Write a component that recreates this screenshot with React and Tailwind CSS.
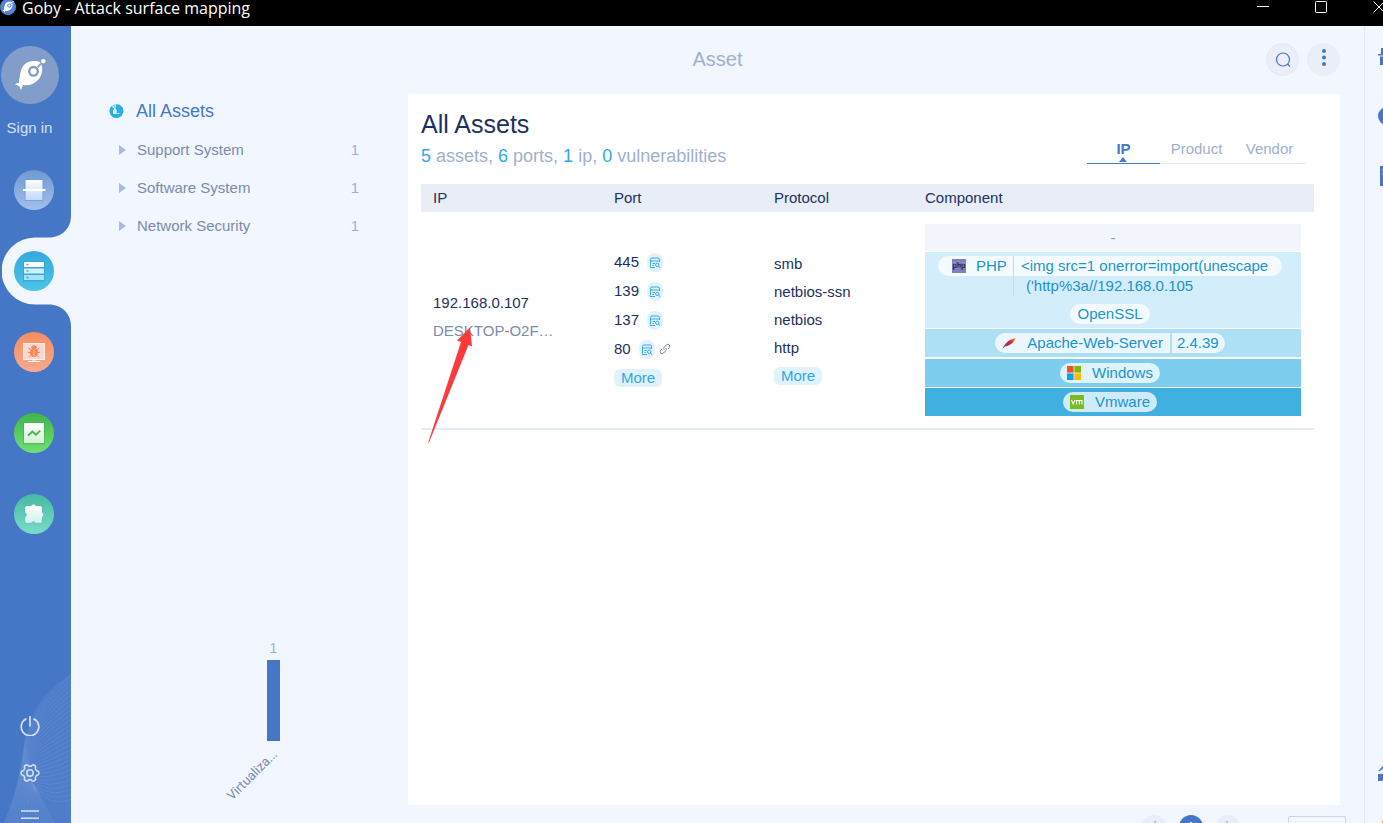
import { useState } from "react";

const assetTypes = [
    { name: "Support System", count: 1 },
    { name: "Software System", count: 1 },
    { name: "Network Security", count: 1 },
];

const ports = [
    { port: 445, link: false },
    { port: 139, link: false },
    { port: 137, link: false },
    { port: 80, link: true },
];

const protocols = ["smb", "netbios-ssn", "netbios", "http"];

const waveLines = Array.from({ length: 26 }, (_, i) => i);

// six-lobed outline of the settings gear
const gearPath =
    "M" +
    Array.from({ length: 72 }, (_, i) => {
        const angle = (i * Math.PI) / 36;
        const radius = 8.6 + 1.2 * Math.tanh(2 * Math.cos(6 * angle));
        return `${(11 + radius * Math.cos(angle)).toFixed(2)} ${(11 + radius * Math.sin(angle)).toFixed(2)}`;
    }).join("L") +
    "z";

const GobyShape = ({ className, hole }) => (
    <svg viewBox="0 0 32 32" className={className} aria-hidden="true">
        <path
            d="M.8 25.300 5 23.500C6 12 8 5 15 2.800c4-1.200 8-1 11 .2C29.500 8 29 16 24 21c-5 5-11 6-15 5l-2 5-1.800-3.700z"
            fill="#fff"
        />
        <circle cx="19.500" cy="12.300" r="5.500" fill={hole} />
        <circle cx="19.500" cy="12.300" r="3.100" fill="#fff" />
        <path d="m23.500 8.300 3.500-3.800" stroke={hole} strokeWidth="1.800" />
        <circle cx="29.300" cy="2.300" r="2.200" fill="#fff" />
    </svg>
);

const ScanIcon = () => (
    <svg viewBox="0 0 40 40" className="size-10" aria-hidden="true">
        <defs>
            <linearGradient id="scanBg" x2="0" y2="1">
                <stop stopColor="#6f98d3" />
                <stop offset="1" stopColor="#a3bfec" />
            </linearGradient>
            <linearGradient id="scanFg" x2="0" y2="1">
                <stop stopColor="#fbfdff" />
                <stop offset="1" stopColor="#c2d8ff" />
            </linearGradient>
        </defs>
        <circle cx="20" cy="20" r="20" fill="url(#scanBg)" />
        <rect x="10.500" y="9.500" width="19" height="21.500" fill="#5c88cf" opacity=".45" />
        <rect x="11.500" y="10" width="17" height="20" fill="url(#scanFg)" />
        <rect x="9" y="19" width="22.500" height="2" fill="#fff" />
    </svg>
);

const AssetIcon = () => (
    <svg viewBox="0 0 40 40" className="size-10" aria-hidden="true">
        <defs>
            <linearGradient id="assetBg" x2="0" y2="1">
                <stop stopColor="#36a9df" />
                <stop offset="1" stopColor="#4cc4ea" />
            </linearGradient>
        </defs>
        <circle cx="20" cy="20" r="20" fill="url(#assetBg)" />
        <rect x="9" y="10.500" width="22" height="20" fill="#2490c4" opacity=".4" />
        <rect x="10" y="11" width="20" height="5" fill="#fff" />
        <rect x="10" y="17.500" width="20" height="5" fill="#d3f1fb" />
        <rect x="10" y="24" width="20" height="5" fill="#a6e3f6" />
        <path d="M12.500 13.500h2M12.500 20h2M12.500 26.500h2" stroke="#3aaede" strokeWidth="1.500" />
    </svg>
);

const VulnIcon = () => (
    <svg viewBox="0 0 40 40" className="size-10" aria-hidden="true">
        <defs>
            <linearGradient id="vulnBg" x2="0" y2="1">
                <stop stopColor="#f78d5e" />
                <stop offset="1" stopColor="#f9a990" />
            </linearGradient>
        </defs>
        <circle cx="20" cy="20" r="20" fill="url(#vulnBg)" />
        <rect x="9.500" y="11.500" width="21" height="16" fill="#ffd9cf" stroke="#fff0eb" />
        <path d="M14 29.500h12M18 28h4" stroke="#fff" strokeWidth="1.200" />
        <g stroke="#f5885a" fill="#f5885a">
            <ellipse cx="20" cy="20.500" rx="3.500" ry="4.200" />
            <path d="M17.500 16c0-3 5-3 5 0zM14 20.500h12M14.500 16l3 2M25.500 16l-3 2M14.500 25.500l3-2.500M25.500 25.500l-3-2.500" />
        </g>
        <path d="M20 17.500v7" stroke="#ffd9cf" strokeWidth=".7" />
    </svg>
);

const ReportIcon = () => (
    <svg viewBox="0 0 40 40" className="size-10" aria-hidden="true">
        <defs>
            <linearGradient id="reportBg" x2="0" y2="1">
                <stop stopColor="#3fb54a" />
                <stop offset="1" stopColor="#6fe075" />
            </linearGradient>
            <linearGradient id="reportFg" x2="0" y2="1">
                <stop stopColor="#fff" />
                <stop offset="1" stopColor="#d2f2d2" />
            </linearGradient>
        </defs>
        <circle cx="20" cy="20" r="20" fill="url(#reportBg)" />
        <rect x="9" y="9.500" width="22" height="22" fill="#2e9a3b" opacity=".35" />
        <rect x="10" y="10" width="20" height="20" fill="url(#reportFg)" />
        <path d="m14 22.500 4.500-4 3.500 3.200 4.200-4" fill="none" stroke="#44b54e" strokeWidth="1.800" />
    </svg>
);

const PluginIcon = () => (
    <svg viewBox="0 0 40 40" className="size-10" aria-hidden="true">
        <defs>
            <linearGradient id="pluginBg" x2="0" y2="1">
                <stop stopColor="#46b9a2" />
                <stop offset="1" stopColor="#79dccb" />
            </linearGradient>
            <linearGradient id="pluginFg" x2="0" y2="1">
                <stop stopColor="#fff" />
                <stop offset="1" stopColor="#cff3ea" />
            </linearGradient>
        </defs>
        <circle cx="20" cy="20" r="20" fill="url(#pluginBg)" />
        <path
            d="M12.500 12h4.700a2.400 2.400 0 0 1 4.600 0h4.700q1.500 0 1.500 1.500v5a2.400 2.400 0 0 1 0 4.500v4.500q0 1.500-1.500 1.500h-5a2.200 2.200 0 0 0-4.200 0h-4.800q-1.500 0-1.500-1.500V23a2.200 2.200 0 0 0 0-4.300v-5.200q0-1.500 1.500-1.500z"
            fill="url(#pluginFg)"
            stroke="#3ea591"
            strokeOpacity=".3"
            strokeWidth=".6"
        />
    </svg>
);

const navItems = [
    { label: "Scan", Icon: ScanIcon },
    { label: "Asset", Icon: AssetIcon },
    { label: "Vulnerability", Icon: VulnIcon },
    { label: "Report", Icon: ReportIcon },
    { label: "Extensions", Icon: PluginIcon },
];

const BannerIcon = () => (
    <svg viewBox="0 0 16 19" className="h-[19px] w-4" aria-hidden="true">
        <rect width="16" height="19" rx="8" fill="#e0f3fc" />
        <g fill="none" stroke="#3aa9e6">
            <path d="M12.500 9V6.500q0-1.500-1.500-1.500H5Q3.500 5 3.500 6.500v7M3 14.500h5M3.500 8h9M5.500 10.500H8M5.500 12.500H7" />
            <circle cx="10.300" cy="11.800" r="1.700" />
            <path d="m11.500 13 1.500 1.800" />
        </g>
    </svg>
);

const LinkIcon = () => (
    <svg viewBox="0 0 12 12" className="size-3" fill="none" stroke="#6f86bd" aria-hidden="true">
        <path d="M5.300 6.900a2 2 0 0 1 0-2.800L7.600 1.700a2 2 0 0 1 2.800 2.800L9 6M6.600 5.100a2 2 0 0 1 0 2.800L4.300 10.300a2 2 0 0 1-2.800-2.800L3 6" />
    </svg>
);

const ApacheIcon = () => (
    <svg viewBox="0 0 14 14" className="size-3.5" aria-hidden="true">
        <defs>
            <linearGradient id="feather" x1="1" y1="0" x2="0" y2="1">
                <stop stopColor="#f69923" />
                <stop offset=".4" stopColor="#d0223a" />
                <stop offset="1" stopColor="#7a3a8e" />
            </linearGradient>
        </defs>
        <path d="M.5 13C2 9 6 3.500 13.500 2 12.500 5.500 9 9.500 3 10.500z" fill="url(#feather)" />
    </svg>
);

const WindowsIcon = () => (
    <svg viewBox="0 0 14 14" className="size-3.5" aria-hidden="true">
        <path d="M0 0h6.600v6.600H0z" fill="#f25022" />
        <path d="M7.400 0H14v6.600H7.400z" fill="#7fba00" />
        <path d="M0 7.400h6.600V14H0z" fill="#00a4ef" />
        <path d="M7.400 7.400H14V14H7.400z" fill="#ffb900" />
    </svg>
);

const Sidebar = () => (
    <nav className="relative flex w-[71px] shrink-0 flex-col overflow-hidden bg-[#4677c7] pt-5">
        <svg viewBox="0 0 71 150" className="absolute bottom-0 left-0 h-[150px] w-full" fill="none" stroke="#fff" aria-hidden="true">
            <path d="M71 1C42 20 30 40 25 68 20 105 15 125 4 150H71z" fill="#fff" stroke="none" opacity=".05" />
            {waveLines.map((i) => (
                <path
                    key={i}
                    d={`M${4 + i * 2} 150C${15 + i} 125 ${20 + i * 0.5} 105 ${25 + i * 0.4} ${68 + i * 2}C${32 + i * 0.4} ${44 + i * 3} 48 ${22 + i * 4.5} 72 ${1 + i * 5}`}
                    strokeWidth=".6"
                    opacity=".13"
                />
            ))}
        </svg>
        <button className="flex w-[59px] flex-col items-center gap-3 text-[15px] leading-6 text-[#d3e0f7]">
            <span className="flex size-[58px] items-center justify-center rounded-full bg-[#839dcb]">
                <GobyShape className="size-8" hole="#839dcb" />
            </span>
            Sign in
        </button>
        <ul className="mt-[30px] flex flex-col gap-[41px] pl-3.5">
            {navItems.map(({ label, Icon }) => (
                <li key={label} className="relative h-10">
                    {label === "Asset" && (
                        <svg viewBox="0 0 69 110" className="absolute -top-[35px] -left-3 h-[110px] w-[69px]" aria-hidden="true">
                            <path d="M69 0C69 12 60 21.500 47 21.500H33a33.500 33.500 0 0 0 0 67H47C60 88.500 69 98 69 110z" fill="#f1f6ff" />
                        </svg>
                    )}
                    <button aria-label={label} className="relative block">
                        <Icon />
                    </button>
                </li>
            ))}
        </ul>
        <div className="relative mt-auto -mb-[7px] flex w-[59px] flex-col items-center gap-[27px] text-[#d3e0f7]">
            <button aria-label="Power">
                <svg viewBox="0 0 20 20" className="size-5" fill="none" stroke="currentColor" strokeWidth="1.700">
                    <path d="M10 0v10.500M6.500 2.800a8.800 8.800 0 1 0 7 0" />
                </svg>
            </button>
            <button aria-label="Settings">
                <svg viewBox="0 0 22 22" className="size-5" fill="none" stroke="currentColor" strokeWidth="1.700" strokeLinejoin="round">
                    <path d={gearPath} />
                    <circle cx="11" cy="11" r="3.500" />
                </svg>
            </button>
            <button aria-label="Menu">
                <svg viewBox="0 0 20 20" className="size-5" fill="none" stroke="currentColor" strokeWidth="1.600">
                    <path d="M1 1h18M1 8.200h18M1 15.400h18" />
                </svg>
            </button>
        </div>
    </nav>
);

const AssetTree = () => (
    <aside className="flex w-[337px] shrink-0 flex-col pl-[37px]">
        <button className="flex h-[34px] items-center gap-3 text-left text-[18px] text-[#4677c7]">
            <svg viewBox="0 0 16 16" className="size-4" aria-hidden="true">
                <path d="M8.500 1A7 7 0 1 1 3.500 3L7 6.500z" fill="#27aeea" />
                <path d="M7.800 1A7 7 0 0 0 3.800 2.700L7.500 6z" fill="#8fd8f6" />
                <path d="M5.500 10.500V7.200L7 5.800l1.200 1.400v3.300zM8.800 10.500h2.700M6.800 8v1" fill="#d4f0fc" stroke="#fff" strokeWidth=".8" />
            </svg>
            All Assets
        </button>
        <ul className="mt-[3px]">
            {assetTypes.map((type) => (
                <li key={type.name}>
                    <button className="flex h-[38px] w-[251px] items-center pl-[11px] text-[15px] text-[#7b8bab]">
                        <svg viewBox="0 0 7 10" className="mr-[11px] h-2.5 w-[7px]" fill="#a5bbe4" aria-hidden="true">
                            <path d="M0 0l7 5-7 5z" />
                        </svg>
                        {type.name}
                        <span className="ml-auto text-[#a0b0d0]">{type.count}</span>
                    </button>
                </li>
            ))}
        </ul>
        <svg viewBox="0 0 120 190" className="mt-auto ml-[102px] h-[190px] w-[120px] font-['Liberation_Sans']" role="img" aria-label="Assets by type">
            <text x="63.500" y="20" textAnchor="middle" fontSize="14" fill="#a0b0d0">1</text>
            <rect x="57" y="27" width="13" height="81" fill="#4677c7" />
            <text transform="translate(68 122) rotate(-45)" textAnchor="end" fontSize="13" fontFamily="Roboto" fill="#7b8bab">Virtualiza...</text>
        </svg>
    </aside>
);

const Pill = ({ icon, children, version }) => (
    <span className="flex h-5 gap-0.5">
        <span className={`flex items-center gap-[11px] bg-white/75 px-[7px] ${version ? "rounded-l-full" : "rounded-full"}`}>
            {icon}
            {children}
        </span>
        {version && <span className="flex items-center rounded-r-full bg-white/75 pr-1.5 pl-[5px]">{version}</span>}
    </span>
);

const Components = () => (
    <div className="flex flex-col gap-px text-[15px] leading-5 text-[#1b93cf]">
        <div className="flex h-[27px] items-center justify-center bg-[#f2f6fc] text-[#7b9cd0]">-</div>
        <div className="flex flex-col items-center gap-2 bg-[#d4edfb] py-1 pr-1.5">
            <div className="flex h-10 w-[344px]">
                <div className="flex h-5 w-[75px] items-center gap-2.5 rounded-l-full bg-white/75 pl-3.5">
                    <svg viewBox="0 0 14 14" className="size-3.5" aria-hidden="true">
                        <path d="M0 0h14v14H0z" fill="#7d7fc0" />
                        <path d="M1.500 11V5h2.500v3.500H2M6 3v5.500M6 5.500h2.200v3M10 11V5h2.500v3.500h-2" fill="none" stroke="#34345e" strokeWidth="1.200" />
                        <path d="M1 4h3M9.500 4h3.500M6 2.500h1" stroke="#d9d9ee" strokeWidth=".6" />
                    </svg>
                    PHP
                </div>
                <div className="flex-1 border-l border-[#b4e1f6]">
                    <div className="h-5 rounded-r-full bg-white/75 pl-[7px] whitespace-nowrap">&lt;img src=1 onerror=import(unescape</div>
                    <div className="pl-3">('http%3a//192.168.0.105</div>
                </div>
            </div>
            <Pill>OpenSSL</Pill>
        </div>
        <div className="mb-px flex h-7 items-center justify-center bg-[#addff5] pr-1.5">
            <Pill icon={<ApacheIcon />} version="2.4.39">Apache-Web-Server</Pill>
        </div>
        <div className="flex h-7 items-center justify-center bg-[#7dcdee] pr-1.5">
            <Pill icon={<WindowsIcon />}>Windows</Pill>
        </div>
        <div className="flex h-7 items-center justify-center bg-[#3fb0e0] pr-1.5">
            <Pill
                icon={
                    <svg viewBox="0 0 14 14" className="size-3.5" aria-hidden="true">
                        <path d="M0 0h14v14H0z" fill="#78bd20" />
                        <path d="M1.500 5l1.700 4L5 5M6.500 9.500V5.500h5.500v4M9.300 5.500v4" fill="none" stroke="#fff" strokeWidth="1.100" />
                    </svg>
                }
            >
                Vmware
            </Pill>
        </div>
    </div>
);

const MoreButton = () => (
    <button className="h-[18px] w-12 rounded-md bg-[#e0f3fc] leading-[18px] text-[#2fa8ea]">More</button>
);

const AssetTable = () => (
    <table className="mt-4 w-full table-fixed text-left text-[15px] text-[#1c3160]">
        <thead>
            <tr className="h-7 bg-[#e9edf6]">
                <th className="w-[181px] pl-3 font-normal">IP</th>
                <th className="w-40 pl-3 font-normal">Port</th>
                <th className="w-[151px] pl-3 font-normal">Protocol</th>
                <th className="pl-3 font-normal">Component</th>
            </tr>
        </thead>
        <tbody>
            <tr className="border-b-2 border-[#e5ebf7]">
                <td className="relative pb-1.5 pl-3 leading-7">
                    <div>192.168.0.107</div>
                    <div className="text-[#7b8bab]">DESKTOP-O2F…</div>
                    <svg viewBox="0 0 46 117" className="absolute top-[115px] left-[7px] h-[117px] w-[46px]" aria-hidden="true">
                        <path d="M.2 115.500 33 15l-4-1.500L42 .5l2 19-3.500-1.500L1 115.500z" fill="#fc3a3a" />
                    </svg>
                </td>
                <td className="pl-3">
                    {ports.map(({ port, link }) => (
                        <div key={port} className="flex h-[29px] items-center">
                            {port}
                            <button aria-label={`Banner of port ${port}`} className="ml-2">
                                <BannerIcon />
                            </button>
                            {link && (
                                <a href="#port-80" aria-label="Open in browser" className="ml-1">
                                    <LinkIcon />
                                </a>
                            )}
                        </div>
                    ))}
                    <div className="flex h-[29px] items-center">
                        <MoreButton />
                    </div>
                </td>
                <td className="pl-3">
                    {protocols.map((protocol) => (
                        <div key={protocol} className="h-7 leading-7">{protocol}</div>
                    ))}
                    <div className="flex h-7 items-center">
                        <MoreButton />
                    </div>
                </td>
                <td className="py-3 pr-[13px] pl-3">
                    <Components />
                </td>
            </tr>
        </tbody>
    </table>
);

const RightRail = () => (
    <div className="flex w-[19px] shrink-0 flex-col overflow-hidden border-l border-[#e3eaf7] pt-5 pl-[13px] text-[#4677c7]">
        <button aria-label="Tools" className="size-5">
            <svg viewBox="0 0 20 20" className="size-5" fill="currentColor">
                <path d="M3 2h14v6H3zM0 8h20v1.500H0zM2 10.500h16V19H2z" />
            </svg>
        </button>
        <button aria-label="History" className="mt-10 size-5">
            <svg viewBox="0 0 20 20" className="size-5" fill="currentColor">
                <circle cx="9" cy="10" r="9" />
            </svg>
        </button>
        <button aria-label="Log" className="mt-10 size-5">
            <svg viewBox="0 0 20 20" className="size-5" fill="currentColor">
                <path d="M2 0h16v20H2z" />
                <path d="M3.500 4H16M3.500 8H16" stroke="#6fc0f0" />
            </svg>
        </button>
        <button aria-label="Share" className="mt-auto size-5">
            <svg viewBox="0 0 20 20" className="size-5" fill="currentColor">
                <path d="M0 8 7 1l7 7-2 1-5-5-5 4zM0 11l14-1v7L0 18z" />
            </svg>
        </button>
        <button aria-label="Warnings" className="mt-8 -mb-3 size-5">
            <svg viewBox="0 0 20 20" className="size-5" fill="#fba510">
                <path d="M6 1h2l10 18H0z" />
            </svg>
        </button>
    </div>
);

const App = () => {
    const [tab, setTab] = useState("IP");

    return (
        <div className="flex h-screen flex-col overflow-hidden bg-[#f1f6ff] font-['Liberation_Sans',sans-serif]">
            {/* Title bar */}
            <header className="flex h-[26px] shrink-0 items-start justify-between bg-black text-white">
                <div className="flex items-start gap-1.5 font-['Open_Sans',sans-serif] text-[16px] leading-4">
                    <span className="-mt-px flex size-4 items-center justify-center rounded-full bg-[#4f83da]">
                        <GobyShape className="size-3" hole="#4f83da" />
                    </span>
                    Goby - Attack surface mapping
                </div>
                <div className="-mr-0.5 flex gap-[46px]">
                    <button aria-label="Minimize">
                        <svg viewBox="0 0 12 14" className="h-3.5 w-3" stroke="#fff"><path d="M0 6.500h12" /></svg>
                    </button>
                    <button aria-label="Maximize">
                        <svg viewBox="0 0 12 14" className="h-3.5 w-3" fill="none" stroke="#fff"><rect x=".5" y="1.500" width="11" height="11" rx="1" /></svg>
                    </button>
                    <button aria-label="Close">
                        <svg viewBox="0 0 12 14" className="h-3.5 w-3" stroke="#fff"><path d="M.5 1.500l11 11M11.500 1.500l-11 11" /></svg>
                    </button>
                </div>
            </header>

            <div className="flex min-h-0 flex-1">
                <Sidebar />
                <div className="flex min-w-0 flex-1 flex-col">
                    <div className="relative flex h-[68px] shrink-0 items-center justify-center pb-0.5">
                        <h1 className="text-[20px] text-[#a0b0d0]">Asset</h1>
                        <div className="absolute right-6 flex gap-2">
                            <button aria-label="Search" className="flex size-[33px] items-center justify-center rounded-full border border-[#e2e8f5] bg-[#e9eef8]">
                                <svg viewBox="0 0 16 16" className="size-4" fill="none" stroke="#4677c7" strokeWidth="1.200">
                                    <circle cx="8" cy="8.500" r="6.500" />
                                    <path d="m12.500 13 2.500 2.500" />
                                </svg>
                            </button>
                            <button aria-label="More actions" className="flex size-[33px] justify-center rounded-full bg-[#e9eef8] pt-1.5">
                                <svg viewBox="0 0 4 18" className="h-[18px] w-1" fill="#4677c7">
                                    <circle cx="2" cy="2" r="2" />
                                    <circle cx="2" cy="8.500" r="2" />
                                    <circle cx="2" cy="15" r="2" />
                                </svg>
                            </button>
                        </div>
                    </div>

                    <div className="flex min-h-0 flex-1">
                        <AssetTree />
                        <div className="flex min-w-0 flex-1 flex-col">
                            <main className="mr-6 flex-1 bg-white pt-4 pr-[26px] pl-[13px]">
                                <div className="flex items-end justify-between">
                                    <div>
                                        <h2 className="text-[25px] leading-7 text-[#1c3160]">All Assets</h2>
                                        <p className="mt-1.5 text-[18px] leading-6 text-[#a0b0d0]">
                                            <span className="text-[#2fa8ea]">5</span> assets, <span className="text-[#2fa8ea]">6</span> ports,{" "}
                                            <span className="text-[#2fa8ea]">1</span> ip, <span className="text-[#2fa8ea]">0</span> vulnerabilities
                                        </p>
                                    </div>
                                    <div role="tablist" className="mr-2 mb-1 flex border-b border-[#e3e8f3] text-[15px]">
                                        {["IP", "Product", "Vendor"].map((name) => (
                                            <button
                                                key={name}
                                                role="tab"
                                                aria-selected={tab === name}
                                                onClick={() => setTab(name)}
                                                className={`relative -mb-px h-7 w-[73px] border-b pb-px leading-6 ${
                                                    tab === name ? "border-[#4677c7] font-bold text-[#4677c7]" : "border-transparent text-[#a0b0d0]"
                                                }`}
                                            >
                                                {name}
                                                {tab === name && (
                                                    <svg viewBox="0 0 8 5" className="absolute bottom-px left-8 h-[5px] w-2" fill="#4677c7" aria-hidden="true">
                                                        <path d="M4 0l4 5H0z" />
                                                    </svg>
                                                )}
                                            </button>
                                        ))}
                                    </div>
                                </div>
                                <AssetTable />
                            </main>
                            <footer className="mr-[18px] flex h-[18px] shrink-0 items-start justify-end gap-[13px] pt-2.5 text-[14px] leading-6">
                                <button aria-label="Previous page" className="flex size-6 shrink-0 items-center justify-center rounded-full bg-[#e9eef8]">
                                    <svg viewBox="0 0 12 12" className="size-3" fill="none" stroke="#b4bccd" strokeWidth="1.500"><path d="M8 0 3 6l5 6" /></svg>
                                </button>
                                <button className="size-6 shrink-0 rounded-full bg-[#4677c7] text-white">1</button>
                                <button aria-label="Next page" className="flex size-6 shrink-0 items-center justify-center rounded-full bg-[#e9eef8]">
                                    <svg viewBox="0 0 12 12" className="size-3" fill="none" stroke="#b4bccd" strokeWidth="1.500"><path d="M4 0l5 6-5 6" /></svg>
                                </button>
                                <input
                                    type="text"
                                    aria-label="Go to page"
                                    defaultValue="1"
                                    className="mt-px ml-[35px] h-6 w-[58px] rounded-xs border border-[#ccd5e6] text-center text-[#7b8bab]"
                                />
                            </footer>
                        </div>
                    </div>
                </div>
                <RightRail />
            </div>
        </div>
    );
};

export default App;
